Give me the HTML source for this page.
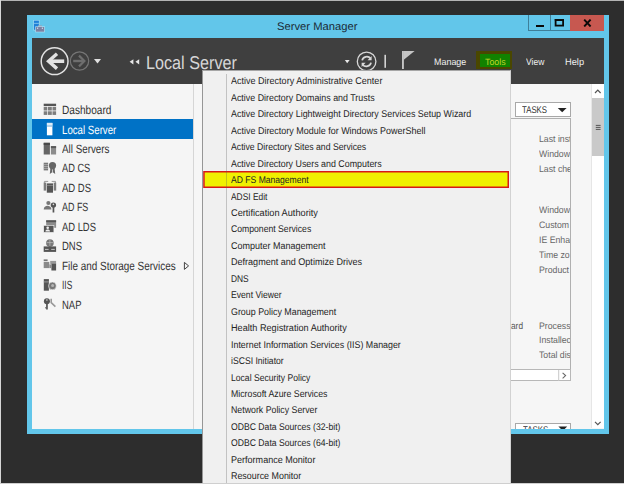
<!DOCTYPE html>
<html><head><meta charset="utf-8">
<style>
*{box-sizing:border-box;margin:0;padding:0}
html,body{width:624px;height:484px;overflow:hidden;background:#2d2d2d;font-family:"Liberation Sans",sans-serif;text-rendering:geometricPrecision}
.abs{position:absolute}
.t{position:absolute;white-space:nowrap;line-height:20px;height:20px;transform-origin:0 50%;display:block}
#edgeT{left:0;top:0;width:624px;height:1px;background:#b4b4b4}
#edgeB{left:0;top:483px;width:624px;height:1px;background:#cfcfcf}
#edgeL{left:0;top:0;width:1px;height:484px;background:#d6d6d6}
#win{left:27px;top:15px;width:582px;height:419px;background:#62c6ea}
#hdr{left:32px;top:38px;width:572px;height:45.6px;background:#3f3f3f}
#body{left:32px;top:83.6px;width:572px;height:345.4px;background:#f6f6f6;overflow:hidden}
#side{left:32px;top:83.6px;width:162px;height:345.4px;background:#f5f5f5;border-right:1px solid #d6d6d6}
#sel{left:32px;top:119px;width:161px;height:19.6px;background:#0072c6}
#menu{left:202px;top:70.4px;width:309px;height:420px;background:#f0f0f0;border:1px solid #a6a6a6;border-left-color:#969696;border-right-color:#d2d2d2}
#gut{left:226px;top:74px;width:1px;height:420px;background:rgba(90,90,90,.3)}
#toolsbox{left:476px;top:51px;width:36px;height:18px;background:#118200;border:2px solid #4a4700;border-left-width:4px;border-top-width:3px}
/* right content */
#tasks{left:515px;top:102.3px;width:56px;height:14.6px;background:#fff;border:1px solid #a8a8a8}
#panel{left:500px;top:118px;width:71.2px;height:263.4px;border:1px solid #b0b0b0;background:#f6f6f6;overflow:hidden}
.rt{position:absolute;left:38.2px;font-size:9.4px;line-height:20px;height:20px;color:#666;white-space:nowrap;transform-origin:0 50%;transform:scaleX(.93)}
#hs{left:500px;top:369.4px;width:71.2px;height:12px;background:#fff;border:1px solid #b8b8b8}
#vs{left:591px;top:83.6px;width:13px;height:344px;background:#fff;border-left:1px solid #e6e6e6}
#thumb{left:592.4px;top:98.2px;width:11.6px;height:58.2px;background:#c9c9c9}
#clip2{left:515px;top:423px;width:57px;height:6px;overflow:hidden}
#tasks2{left:0.4px;top:0;width:55.6px;height:14.6px;background:#fff;border:1px solid #a8a8a8}

#bmin{left:527.8px;top:15px;width:22.4px;height:16.4px;border-left:1px solid #3e7f99;border-bottom:1px solid #3e7f99}
#bmax{left:550.2px;top:15px;width:20px;height:16.4px;border-left:1px solid #3e7f99;border-bottom:1px solid #3e7f99}
#bcls{left:570.2px;top:15px;width:34.2px;height:16.2px;background:#c75850}
#gmin{left:535.5px;top:24.6px;width:8.4px;height:2.2px;background:#0a0a0a}
#gmax{left:554.7px;top:19.1px;width:9.4px;height:7.5px;border:1.8px solid #0a0a0a}
</style></head><body>
<div id="edgeT" class="abs"></div><div id="edgeL" class="abs"></div>
<div id="win" class="abs"></div>
<div id="bmin" class="abs"></div><div id="bmax" class="abs"></div><div id="bcls" class="abs"></div>
<div id="gmin" class="abs"></div><svg class="abs" style="left:550px;top:15px" width="20" height="16" viewBox="0 0 20 16"><rect x="5.6" y="5.1" width="7.5" height="5.5" fill="none" stroke="#0a0a0a" stroke-width="1.8"/><rect x="4.7" y="4.1" width="9.3" height="1.4" fill="#0a0a0a"/></svg>
<svg class="abs" style="left:583px;top:19px" width="9" height="8" viewBox="0 0 9 8"><path d="M1.2 0.6 L7.6 7.5 M7.6 0.6 L1.2 7.5" stroke="#0a0a0a" stroke-width="1.9" fill="none"/></svg>
<svg class="abs" style="left:0;top:0" width="624" height="484" viewBox="0 0 624 484">
<rect x="33.3" y="20" width="6.2" height="10.4" fill="#a9def4"/>
<rect x="33.9" y="20.6" width="5" height="9.2" fill="#1f80d8"/>
<rect x="33.9" y="22.9" width="5" height=".8" fill="#8fcdf0"/>
<rect x="38" y="25.4" width="4" height="2" fill="#9aa0b8"/>
<rect x="35.2" y="26.4" width="9.6" height="5.9" fill="#b4e2f4"/>
<rect x="35.8" y="27" width="8.4" height="4.7" fill="#7b80a2"/>
<rect x="37" y="27.6" width="1.2" height="1.2" fill="#d8e4f0"/><rect x="41.8" y="27.6" width="1.2" height="1.2" fill="#d8e4f0"/>
</svg>
<div id="hdr" class="abs"></div>
<div id="body" class="abs"></div>
<div id="side" class="abs"></div>
<div id="sel" class="abs"></div>
<svg class="abs" style="left:0;top:0" width="624" height="484" viewBox="0 0 624 484">
<!-- dashboard -->
<rect x="43.7" y="103.7" width="12.4" height="2.3" fill="#555"/>
<rect x="43.7" y="106.8" width="3.6" height="3.7" fill="#7d7d7d"/><rect x="48" y="106.8" width="3.8" height="3.7" fill="#7d7d7d"/><rect x="52.5" y="106.8" width="3.6" height="3.7" fill="#7d7d7d"/>
<rect x="43.7" y="111.3" width="3.6" height="3.6" fill="#7d7d7d"/><rect x="48" y="111.3" width="3.8" height="3.6" fill="#7d7d7d"/><rect x="52.5" y="111.3" width="3.6" height="3.6" fill="#7d7d7d"/>
<!-- local server -->
<rect x="46.9" y="122.9" width="5.5" height="12.4" fill="#fff"/><rect x="46.9" y="122.9" width="5.5" height="2.4" fill="#dcecf8"/><rect x="46.9" y="125.3" width="5.5" height="1.4" fill="#8fc0e4"/>
<!-- all servers -->
<rect x="43.7" y="142.8" width="6.2" height="11.7" fill="#666"/><rect x="43.7" y="142.8" width="6.2" height="2.2" fill="#4a4a4a"/>
<rect x="50.9" y="146.1" width="5.2" height="8.4" fill="#8c8c8c"/><rect x="50.9" y="146.1" width="5.2" height="2" fill="#5a5a5a"/>
<!-- AD CS -->
<rect x="43.7" y="162.7" width="4.4" height="7.7" fill="#787878"/><path d="M43.7 164.6H48.1M43.7 166.5H48.1M43.7 168.4H48.1" stroke="#c8c8c8" stroke-width=".6"/>
<circle cx="52.5" cy="165.6" r="3.6" fill="#666"/><path d="M50.4 168 L49.8 173.9 L52.5 172 L55.2 173.9 L54.6 168 Z" fill="#666"/><path d="M52.5 169.4 V172" stroke="#f5f5f5" stroke-width=".7"/>
<!-- AD DS -->
<rect x="43.7" y="182.6" width="2.5" height="8" fill="#7c7c7c"/><rect x="53.7" y="182.6" width="2.5" height="8" fill="#7c7c7c"/>
<path d="M44.4 183 V181.4 H48.2 M55.5 183 V181.4 H51.7" fill="none" stroke="#999" stroke-width="1"/>
<rect x="46.8" y="183.4" width="6.2" height="9.3" fill="#555"/><rect x="46.8" y="185" width="6.2" height=".8" fill="#8a8a8a"/>
<!-- AD FS -->
<circle cx="48.4" cy="203" r="2.1" fill="#777"/><path d="M43.7 209.4 C43.7 204.4 51.4 204.4 51.4 209.4 Z" fill="#777"/>
<circle cx="53.4" cy="205.1" r="2.7" fill="#555"/><rect x="52.6" y="206.8" width="1.7" height="5.7" fill="#555"/><circle cx="53.4" cy="204.4" r=".8" fill="#ddd"/>
<!-- AD LDS -->
<rect x="46.2" y="220.3" width="9.9" height="7.5" fill="#8c8c8c"/><rect x="46.2" y="220.3" width="9.9" height="1.9" fill="#555"/>
<rect x="43.7" y="225.4" width="10.2" height="7" fill="#555" stroke="#f5f5f5" stroke-width=".6"/>
<circle cx="47.7" cy="227.8" r="1.3" fill="#eee"/><path d="M45.4 231.4 C45.4 228.8 50 228.8 50 231.4 Z" fill="#eee"/>
<!-- DNS -->
<circle cx="49.9" cy="243.1" r="3.8" fill="#777"/><path d="M49.9 239.6 V246 M46.6 242.6 H53.2" stroke="#c0c0c0" stroke-width=".7" fill="none"/>
<rect x="43.7" y="246.4" width="12.4" height="5.5" fill="#555"/><path d="M45 249.4 H48.6 M51.2 249.4 H54.8" stroke="#d0d0d0" stroke-width=".9"/>
<!-- File -->
<rect x="43.7" y="259.4" width="3.9" height="1.7" fill="#777"/><rect x="43.7" y="261.9" width="5.6" height="6.2" fill="#8a8a8a"/>
<rect x="50.2" y="260.9" width="5.9" height="3" fill="#999"/><rect x="51.4" y="263.7" width="4.7" height="6.8" fill="#555"/>
<rect x="49.4" y="264.4" width="2" height="3.7" fill="#8a8a8a"/>
<!-- IIS -->
<rect x="43.8" y="279.1" width="5.1" height="11.6" fill="#555"/><rect x="43.8" y="281.4" width="5.1" height="1" fill="#9a9a9a"/>
<circle cx="52.4" cy="285.9" r="3.9" fill="#777" stroke="#f5f5f5" stroke-width=".6"/><circle cx="52.6" cy="285.6" r="1.5" fill="#b4b4b4"/>
<!-- NAP -->
<circle cx="46.9" cy="301.3" r="3" fill="#555"/><circle cx="46.9" cy="300" r=".8" fill="#ddd"/><rect x="46.1" y="303.6" width="1.7" height="5.9" fill="#555"/><rect x="45.2" y="307.2" width="1" height="1.2" fill="#555"/>
<path d="M51.2 298.8 V302.6 L55.4 306.6" fill="none" stroke="#999" stroke-width="1.6"/>
<!-- expander -->
<path d="M184.4 262.4 V269.4 L188.6 265.9 Z" fill="none" stroke="#444" stroke-width="1"/>
</svg>
<div id="vs" class="abs"></div>
<div id="thumb" class="abs"></div>
<div id="panel" class="abs"><div class="rt" style="top:10.0px">Last inst</div><div class="rt" style="top:24.8px">Window</div><div class="rt" style="top:39.9px">Last che</div><div class="rt" style="top:81.0px">Window</div><div class="rt" style="top:95.9px">Custom</div><div class="rt" style="top:111.0px">IE Enhar</div><div class="rt" style="top:125.9px">Time zo</div><div class="rt" style="top:140.8px">Product</div><div class="rt" style="top:196.7px">Processe</div><div class="rt" style="top:211.1px">Installec</div><div class="rt" style="top:225.9px">Total dis</div></div>
<div id="hs" class="abs"></div>
<div id="tasks" class="abs"></div><div id="clip2" class="abs"><div id="tasks2" class="abs"></div><span class="t" style="left:7.6px;top:-1.7px;font-size:9.8px;color:#333;transform:scaleX(.80)">TASKS</span><svg class="abs" style="left:0;top:0" width="60" height="10"><path d="M43.4 3.6 H52.2 L47.8 7.8 Z" fill="#222"/></svg></div>
<svg class="abs" style="left:0;top:0" width="624" height="484" viewBox="0 0 624 484">
<!-- back -->
<circle cx="54.6" cy="61.2" r="13.4" fill="none" stroke="#e2e2e2" stroke-width="1.5"/>
<path d="M57 53.8 L48.6 61.2 L57 68.6" fill="none" stroke="#e2e2e2" stroke-width="3.4" stroke-linejoin="miter"/>
<path d="M49.5 61.2 H64.2" stroke="#e2e2e2" stroke-width="3.6" fill="none"/>
<!-- fwd -->
<circle cx="79.5" cy="61" r="9.2" fill="none" stroke="#767676" stroke-width="1.2"/>
<path d="M79 55.6 L84.4 61 L79 66.4" fill="none" stroke="#6e6e6e" stroke-width="2.2"/>
<path d="M73.2 61 H84" stroke="#6e6e6e" stroke-width="2.4" fill="none"/>
<path d="M94 59 H101 L97.5 63.4 Z" fill="#e0e0e0"/>
<!-- breadcrumb chevrons -->
<path d="M133.4 59.2 V64.4 L129.6 61.8 Z M139.2 59.2 V64.4 L135.4 61.8 Z" fill="#e6e6e6"/>
<!-- small drop -->
<path d="M344.8 60 H349.6 L347.2 63.2 Z" fill="#e8e8e8"/>
<!-- refresh -->
<circle cx="366.6" cy="61.4" r="9.3" fill="none" stroke="#d8d8d8" stroke-width="1.3"/>
<path d="M362.2 60.4 A4.6 4.2 0 0 1 370.6 58.6" fill="none" stroke="#d8d8d8" stroke-width="1.7"/>
<path d="M371.6 56 V60.2 H367.6 Z" fill="#d8d8d8"/>
<path d="M371 62.6 A4.6 4.2 0 0 1 362.6 64.4" fill="none" stroke="#d8d8d8" stroke-width="1.7"/>
<path d="M361.6 67 V62.8 H365.6 Z" fill="#d8d8d8"/>
<!-- bar -->
<rect x="384.4" y="54.8" width="1.6" height="13" fill="#d2d2d2"/>
<!-- flag -->
<rect x="402" y="51" width="1.9" height="18" fill="#c4c4c4"/>
<path d="M403.5 51 H414.6 L403.5 60 Z" fill="#c4c4c4"/>
</svg>
<svg class="abs" style="left:0;top:0" width="624" height="484" viewBox="0 0 624 484">
<path d="M557.8 108 H566.6 L562.2 112.2 Z" fill="#222"/>
<path d="M595 93 L597.8 90.2 L600.6 93" fill="none" stroke="#555" stroke-width="1.2"/>
<path d="M595 421.8 L597.8 424.6 L600.6 421.8" fill="none" stroke="#555" stroke-width="1.2"/>
<path d="M595.8 125.4 H600.6 M595.8 127.4 H600.6 M595.8 129.4 H600.6" stroke="#555" stroke-width="1"/>
<path d="M562.6 372.8 L565.6 375.6 L562.6 378.4" fill="none" stroke="#666" stroke-width="1.1"/>
<rect x="558.2" y="370" width="1" height="11" fill="#c8c8c8"/>
</svg>
<div id="toolsbox" class="abs"></div>
<div id="menu" class="abs"></div>
<svg class="abs" style="left:0;top:0" width="624" height="484" viewBox="0 0 624 484"><rect x="203.95" y="171.75" width="304.3" height="15.5" fill="#f0f000" stroke="#d81818" stroke-width="1.5"/></svg>
<div id="gut" class="abs"></div>
<span id="ttl" class="t" style="left:277.3px;top:16.8px;font-size:11px;color:#1b2a36;transform:scaleX(1.0193);">Server Manager</span>
<span id="h1" class="t" style="left:145.8px;top:52.7px;font-size:18.5px;color:#d6d6d6;transform:scaleX(0.8752);">Local Server</span>
<span id="mg" class="t" style="left:433.7px;top:52.0px;font-size:9.4px;color:#f0f0f0;transform:scaleX(0.9531);">Manage</span>
<span id="tl" class="t" style="left:485.0px;top:52.2px;font-size:9.2px;color:#c0d428;transform:scaleX(0.9602);">Tools</span>
<span id="vw" class="t" style="left:525.7px;top:52.0px;font-size:9.4px;color:#f0f0f0;transform:scaleX(0.9079);">View</span>
<span id="hp" class="t" style="left:565.3px;top:52.0px;font-size:9.4px;color:#f0f0f0;transform:scaleX(0.9906);">Help</span>
<span id="n0" class="t" style="left:62.3px;top:100.0px;font-size:12px;color:#333;transform:scaleX(0.8413);">Dashboard</span>
<span id="n1" class="t" style="left:62.3px;top:119.5px;font-size:12px;color:#fff;transform:scaleX(0.8059);">Local Server</span>
<span id="n2" class="t" style="left:62.3px;top:138.9px;font-size:12px;color:#333;transform:scaleX(0.8187);">All Servers</span>
<span id="n3" class="t" style="left:62.3px;top:158.4px;font-size:12px;color:#333;transform:scaleX(0.7687);">AD CS</span>
<span id="n4" class="t" style="left:62.3px;top:177.8px;font-size:12px;color:#333;transform:scaleX(0.7905);">AD DS</span>
<span id="n5" class="t" style="left:62.3px;top:197.3px;font-size:12px;color:#333;transform:scaleX(0.7441);">AD FS</span>
<span id="n6" class="t" style="left:62.3px;top:216.8px;font-size:12px;color:#333;transform:scaleX(0.7818);">AD LDS</span>
<span id="n7" class="t" style="left:62.3px;top:236.2px;font-size:12px;color:#333;transform:scaleX(0.7891);">DNS</span>
<span id="n8" class="t" style="left:62.3px;top:255.7px;font-size:12px;color:#333;transform:scaleX(0.8275);">File and Storage Services</span>
<span id="n9" class="t" style="left:62.3px;top:275.1px;font-size:12px;color:#333;transform:scaleX(0.6952);">IIS</span>
<span id="n10" class="t" style="left:62.3px;top:294.6px;font-size:12px;color:#333;transform:scaleX(0.7899);">NAP</span>
<span id="m0" class="t" style="left:230.6px;top:72.4px;font-size:9.8px;color:#242424;transform:scaleX(0.9207);">Active Directory Administrative Center</span>
<span id="m1" class="t" style="left:230.6px;top:88.9px;font-size:9.8px;color:#242424;transform:scaleX(0.9064);">Active Directory Domains and Trusts</span>
<span id="m2" class="t" style="left:230.6px;top:105.3px;font-size:9.8px;color:#242424;transform:scaleX(0.9078);">Active Directory Lightweight Directory Services Setup Wizard</span>
<span id="m3" class="t" style="left:230.6px;top:121.8px;font-size:9.8px;color:#242424;transform:scaleX(0.9155);">Active Directory Module for Windows PowerShell</span>
<span id="m4" class="t" style="left:230.6px;top:138.2px;font-size:9.8px;color:#242424;transform:scaleX(0.8868);">Active Directory Sites and Services</span>
<span id="m5" class="t" style="left:230.6px;top:154.7px;font-size:9.8px;color:#242424;transform:scaleX(0.9045);">Active Directory Users and Computers</span>
<span id="m6" class="t" style="left:230.6px;top:171.1px;font-size:9.8px;color:#242424;transform:scaleX(0.8753);">AD FS Management</span>
<span id="m7" class="t" style="left:230.6px;top:187.6px;font-size:9.8px;color:#242424;transform:scaleX(0.8568);">ADSI Edit</span>
<span id="m8" class="t" style="left:230.6px;top:204.0px;font-size:9.8px;color:#242424;transform:scaleX(0.9387);">Certification Authority</span>
<span id="m9" class="t" style="left:230.6px;top:220.4px;font-size:9.8px;color:#242424;transform:scaleX(0.8819);">Component Services</span>
<span id="m10" class="t" style="left:230.6px;top:236.9px;font-size:9.8px;color:#242424;transform:scaleX(0.9172);">Computer Management</span>
<span id="m11" class="t" style="left:230.6px;top:253.4px;font-size:9.8px;color:#242424;transform:scaleX(0.9225);">Defragment and Optimize Drives</span>
<span id="m12" class="t" style="left:230.6px;top:269.8px;font-size:9.8px;color:#242424;transform:scaleX(0.8556);">DNS</span>
<span id="m13" class="t" style="left:230.6px;top:286.2px;font-size:9.8px;color:#242424;transform:scaleX(0.8810);">Event Viewer</span>
<span id="m14" class="t" style="left:230.6px;top:302.7px;font-size:9.8px;color:#242424;transform:scaleX(0.9069);">Group Policy Management</span>
<span id="m15" class="t" style="left:230.6px;top:319.1px;font-size:9.8px;color:#242424;transform:scaleX(0.9318);">Health Registration Authority</span>
<span id="m16" class="t" style="left:230.6px;top:335.6px;font-size:9.8px;color:#242424;transform:scaleX(0.9039);">Internet Information Services (IIS) Manager</span>
<span id="m17" class="t" style="left:230.6px;top:352.0px;font-size:9.8px;color:#242424;transform:scaleX(0.8797);">iSCSI Initiator</span>
<span id="m18" class="t" style="left:230.6px;top:368.5px;font-size:9.8px;color:#242424;transform:scaleX(0.8784);">Local Security Policy</span>
<span id="m19" class="t" style="left:230.6px;top:385.0px;font-size:9.8px;color:#242424;transform:scaleX(0.8941);">Microsoft Azure Services</span>
<span id="m20" class="t" style="left:230.6px;top:401.4px;font-size:9.8px;color:#242424;transform:scaleX(0.8965);">Network Policy Server</span>
<span id="m21" class="t" style="left:230.6px;top:417.9px;font-size:9.8px;color:#242424;transform:scaleX(0.8813);">ODBC Data Sources (32-bit)</span>
<span id="m22" class="t" style="left:230.6px;top:434.3px;font-size:9.8px;color:#242424;transform:scaleX(0.8813);">ODBC Data Sources (64-bit)</span>
<span id="m23" class="t" style="left:230.6px;top:450.8px;font-size:9.8px;color:#242424;transform:scaleX(0.9226);">Performance Monitor</span>
<span id="m24" class="t" style="left:230.6px;top:467.2px;font-size:9.8px;color:#242424;transform:scaleX(0.9078);">Resource Monitor</span>
<span id="tk" class="t" style="left:522.0px;top:100.9px;font-size:9.8px;color:#333;transform:scaleX(0.7960);">TASKS</span>
<span id="ard" class="t" style="left:511.2px;top:316.9px;font-size:9.6px;color:#555;transform:scaleX(0.8649);">ard</span>
<div id="edgeB" class="abs"></div>
</body></html>
